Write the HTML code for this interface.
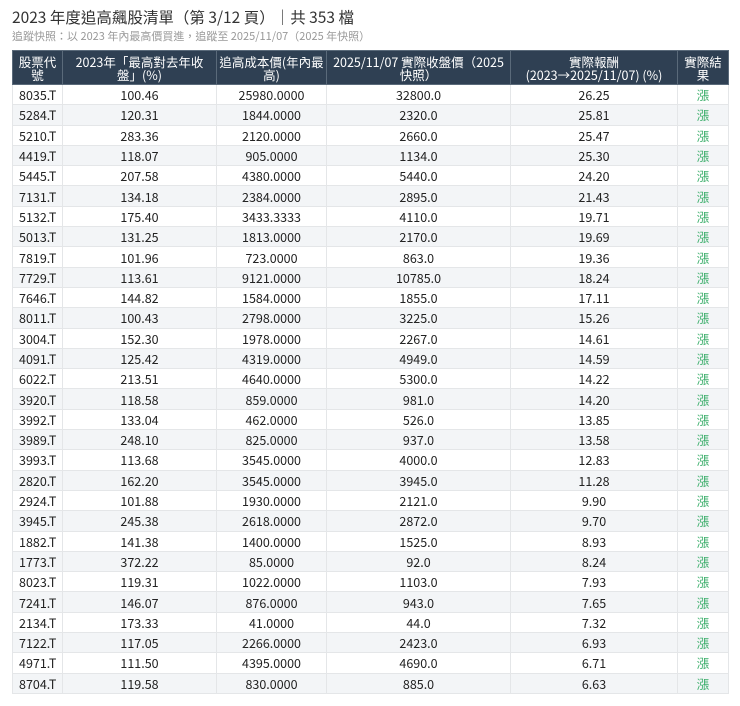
<!DOCTYPE html><html><head><meta charset="utf-8"><style>
body{margin:0;background:#fff;font-family:"Noto Sans CJK TC","Liberation Sans",sans-serif;color:#222;width:740px;height:706px;overflow:hidden}
h1{position:absolute;left:12px;top:7px;margin:0;font-size:15.5px;font-weight:normal;color:#333;line-height:20px}
.sub{position:absolute;left:12px;top:29px;font-size:11px;color:#999;line-height:14px}
table{position:absolute;left:12px;top:50px;border-collapse:collapse;width:716px;font-size:12.5px;table-layout:fixed}
th{background:#2f4053;color:#fff;font-weight:normal;height:33px;padding:0 2px;line-height:13px;border:1px solid #5a6a7a;font-size:12.5px;overflow:hidden;white-space:nowrap}
td{height:19.3px;padding:0;text-align:center;border:1px solid #e4e6e8;line-height:19px;overflow:hidden;white-space:nowrap}
td:first-child{text-align:left;padding-left:6px}
tbody tr:nth-child(even) td{background:#f3f5f7}
td.g{color:#3aae6a}
</style></head><body>
<h1>2023 年度追高飆股清單（第 3/12 頁）｜共 353 檔</h1>
<div class="sub">追蹤快照：以 2023 年內最高價買進，追蹤至 2025/11/07（2025 年快照）</div>
<table>
<colgroup><col style="width:50px"><col style="width:154px"><col style="width:110px"><col style="width:184px"><col style="width:167px"><col style="width:51px"></colgroup>
<thead><tr><th>股票代<br>號</th><th>2023年「最高對去年收<br>盤」(%)</th><th>追高成本價(年內最<br>高)</th><th>2025/11/07 實際收盤價（2025<br>快照）</th><th>實際報酬<br>(2023→2025/11/07) (%)</th><th>實際結<br>果</th></tr></thead>
<tbody>
<tr><td>8035.T</td><td>100.46</td><td>25980.0000</td><td>32800.0</td><td>26.25</td><td class="g">漲</td></tr>
<tr><td>5284.T</td><td>120.31</td><td>1844.0000</td><td>2320.0</td><td>25.81</td><td class="g">漲</td></tr>
<tr><td>5210.T</td><td>283.36</td><td>2120.0000</td><td>2660.0</td><td>25.47</td><td class="g">漲</td></tr>
<tr><td>4419.T</td><td>118.07</td><td>905.0000</td><td>1134.0</td><td>25.30</td><td class="g">漲</td></tr>
<tr><td>5445.T</td><td>207.58</td><td>4380.0000</td><td>5440.0</td><td>24.20</td><td class="g">漲</td></tr>
<tr><td>7131.T</td><td>134.18</td><td>2384.0000</td><td>2895.0</td><td>21.43</td><td class="g">漲</td></tr>
<tr><td>5132.T</td><td>175.40</td><td>3433.3333</td><td>4110.0</td><td>19.71</td><td class="g">漲</td></tr>
<tr><td>5013.T</td><td>131.25</td><td>1813.0000</td><td>2170.0</td><td>19.69</td><td class="g">漲</td></tr>
<tr><td>7819.T</td><td>101.96</td><td>723.0000</td><td>863.0</td><td>19.36</td><td class="g">漲</td></tr>
<tr><td>7729.T</td><td>113.61</td><td>9121.0000</td><td>10785.0</td><td>18.24</td><td class="g">漲</td></tr>
<tr><td>7646.T</td><td>144.82</td><td>1584.0000</td><td>1855.0</td><td>17.11</td><td class="g">漲</td></tr>
<tr><td>8011.T</td><td>100.43</td><td>2798.0000</td><td>3225.0</td><td>15.26</td><td class="g">漲</td></tr>
<tr><td>3004.T</td><td>152.30</td><td>1978.0000</td><td>2267.0</td><td>14.61</td><td class="g">漲</td></tr>
<tr><td>4091.T</td><td>125.42</td><td>4319.0000</td><td>4949.0</td><td>14.59</td><td class="g">漲</td></tr>
<tr><td>6022.T</td><td>213.51</td><td>4640.0000</td><td>5300.0</td><td>14.22</td><td class="g">漲</td></tr>
<tr><td>3920.T</td><td>118.58</td><td>859.0000</td><td>981.0</td><td>14.20</td><td class="g">漲</td></tr>
<tr><td>3992.T</td><td>133.04</td><td>462.0000</td><td>526.0</td><td>13.85</td><td class="g">漲</td></tr>
<tr><td>3989.T</td><td>248.10</td><td>825.0000</td><td>937.0</td><td>13.58</td><td class="g">漲</td></tr>
<tr><td>3993.T</td><td>113.68</td><td>3545.0000</td><td>4000.0</td><td>12.83</td><td class="g">漲</td></tr>
<tr><td>2820.T</td><td>162.20</td><td>3545.0000</td><td>3945.0</td><td>11.28</td><td class="g">漲</td></tr>
<tr><td>2924.T</td><td>101.88</td><td>1930.0000</td><td>2121.0</td><td>9.90</td><td class="g">漲</td></tr>
<tr><td>3945.T</td><td>245.38</td><td>2618.0000</td><td>2872.0</td><td>9.70</td><td class="g">漲</td></tr>
<tr><td>1882.T</td><td>141.38</td><td>1400.0000</td><td>1525.0</td><td>8.93</td><td class="g">漲</td></tr>
<tr><td>1773.T</td><td>372.22</td><td>85.0000</td><td>92.0</td><td>8.24</td><td class="g">漲</td></tr>
<tr><td>8023.T</td><td>119.31</td><td>1022.0000</td><td>1103.0</td><td>7.93</td><td class="g">漲</td></tr>
<tr><td>7241.T</td><td>146.07</td><td>876.0000</td><td>943.0</td><td>7.65</td><td class="g">漲</td></tr>
<tr><td>2134.T</td><td>173.33</td><td>41.0000</td><td>44.0</td><td>7.32</td><td class="g">漲</td></tr>
<tr><td>7122.T</td><td>117.05</td><td>2266.0000</td><td>2423.0</td><td>6.93</td><td class="g">漲</td></tr>
<tr><td>4971.T</td><td>111.50</td><td>4395.0000</td><td>4690.0</td><td>6.71</td><td class="g">漲</td></tr>
<tr><td>8704.T</td><td>119.58</td><td>830.0000</td><td>885.0</td><td>6.63</td><td class="g">漲</td></tr>
</tbody></table>
</body></html>
